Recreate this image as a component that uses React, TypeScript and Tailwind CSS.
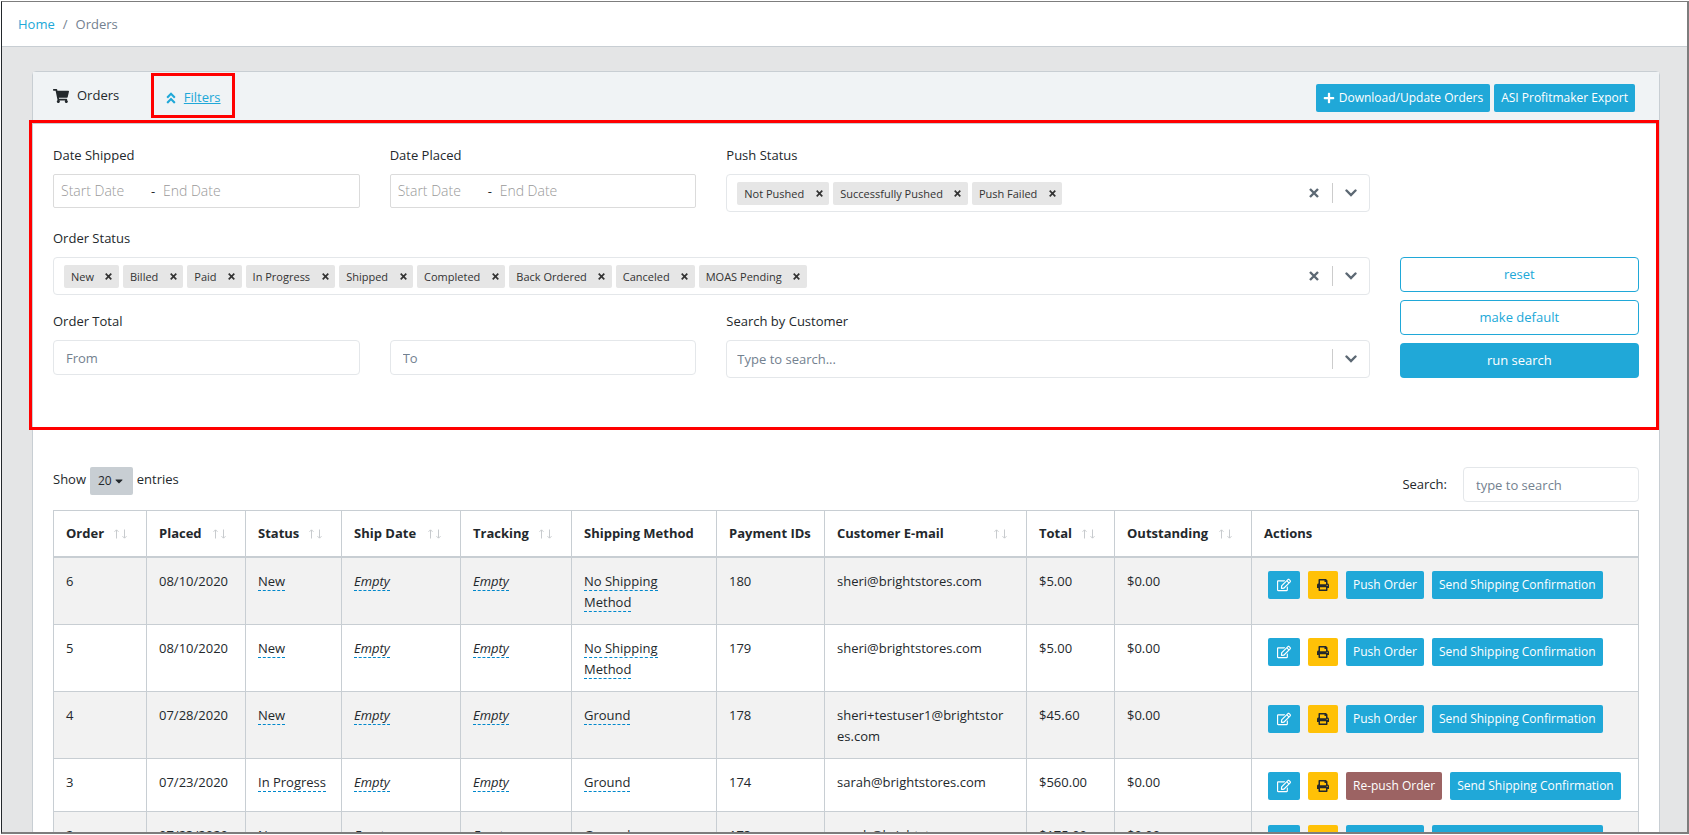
import type { ReactNode } from "react";
import { FaAngleDoubleUp, FaCaretDown, FaPlus, FaPrint, FaRegEdit, FaShoppingCart } from "react-icons/fa";

type Order = {
  id: number;
  placed: string;
  status: string;
  method: string;
  payment: string;
  email: string;
  total: string;
  pushed?: boolean;
};

const pushStatuses = ["Not Pushed", "Successfully Pushed", "Push Failed"];

const orderStatuses = [
  "New",
  "Billed",
  "Paid",
  "In Progress",
  "Shipped",
  "Completed",
  "Back Ordered",
  "Canceled",
  "MOAS Pending",
];

const columns = [
  { title: "Order", width: "w-[93px]", sortable: true },
  { title: "Placed", width: "w-[99px]", sortable: true },
  { title: "Status", width: "w-[96px]", sortable: true },
  { title: "Ship Date", width: "w-[119px]", sortable: true },
  { title: "Tracking", width: "w-[111px]", sortable: true },
  { title: "Shipping Method", width: "w-[145px]", sortable: false },
  { title: "Payment IDs", width: "w-[108px]", sortable: false },
  { title: "Customer E-mail", width: "w-[202px]", sortable: true },
  { title: "Total", width: "w-[88px]", sortable: true },
  { title: "Outstanding", width: "w-[137px]", sortable: true },
  { title: "Actions", width: "", sortable: false },
];

const orders: Order[] = [
  { id: 6, placed: "08/10/2020", status: "New", method: "No Shipping Method", payment: "180", email: "sheri@brightstores.com", total: "$5.00" },
  { id: 5, placed: "08/10/2020", status: "New", method: "No Shipping Method", payment: "179", email: "sheri@brightstores.com", total: "$5.00" },
  { id: 4, placed: "07/28/2020", status: "New", method: "Ground", payment: "178", email: "sheri+testuser1@brightstores.com", total: "$45.60" },
  { id: 3, placed: "07/23/2020", status: "In Progress", method: "Ground", payment: "174", email: "sarah@brightstores.com", total: "$560.00", pushed: true },
  { id: 2, placed: "07/23/2020", status: "New", method: "Ground", payment: "173", email: "sarah@brightstores.com", total: "$175.00" },
];

function Cross({ className }: { className: string }) {
  return (
    <svg viewBox="0 0 10 10" className={className} stroke="currentColor" strokeWidth="2.4" aria-hidden="true">
      <path d="M1 1l8 8M9 1l-8 8" />
    </svg>
  );
}

function Arrow() {
  return (
    <svg viewBox="0 0 12 8" className="w-3 h-2" fill="none" stroke="currentColor" strokeWidth="2.4" strokeLinecap="round" aria-hidden="true">
      <path d="M1.5 1.5L6 6l4.500-4.500" />
    </svg>
  );
}

function SortArrows() {
  return (
    <svg viewBox="0 0 13 10" className="w-[13px] h-[10px] text-[#c8cbce]" fill="none" stroke="currentColor" aria-hidden="true">
      <path d="M2.500 9.500V1M.5 2.800L2.500.8l2 2M10.500 .5V9M8.500 7.200l2 2 2-2" />
    </svg>
  );
}

function MultiSelect({ id, label, values = [] }: { id: string; label: string; values?: string[] }) {
  return (
    <div>
      <label htmlFor={id} className="block mb-2">{label}</label>

      <div className="flex h-[38px] items-center rounded border border-[#e4e7ea] bg-white pl-[10px]">
        <div className="flex gap-1">
          {values.map((value) => (
            <span key={value} className="flex h-[23px] items-center rounded-xs bg-[#e6e6e6] pl-[7px] text-[11px] text-[#333]">
              {value}
              <button aria-label={"Remove " + value} className="ml-[5px] flex h-full w-5 items-center justify-center">
                <Cross className="size-[7px]" />
              </button>
            </span>
          ))}
        </div>

        <input
          id={id}
          placeholder={values.length ? "" : "Type to search..."}
          className="min-w-0 flex-1 outline-none placeholder:text-[#73818f]"
        />

        {values.length > 0 && (
          <button aria-label={"Clear " + label} className="flex w-9 justify-center text-[#5c6873]">
            <Cross className="size-[10px]" />
          </button>
        )}
        <span className="h-5 w-px bg-[#ccc]" />
        <button aria-label={"Open " + label} className="flex w-9 justify-center text-[#5c6873]">
          <Arrow />
        </button>
      </div>
    </div>
  );
}

function DateRange({ id, label }: { id: string; label: string }) {
  return (
    <div>
      <label htmlFor={id} className="block mb-2">{label}</label>

      <div className="flex h-[34px] items-center rounded-xs border border-[#dbdbdb] bg-white pl-[7px]">
        <input id={id} placeholder="Start Date" className="w-[90px] text-sm font-light outline-none placeholder:text-[#999]" />
        <span className="w-[12px]">-</span>
        <input aria-label={label + " end"} placeholder="End Date" className="w-[90px] text-sm font-light outline-none placeholder:text-[#999]" />
      </div>
    </div>
  );
}

function SmallButton({ children, color = "bg-[#20a8d8] text-white", label }: { children: ReactNode; color?: string; label?: string }) {
  return (
    <button aria-label={label} className={"flex h-7 items-center gap-1 rounded-xs px-[7px] text-xs whitespace-nowrap " + color}>
      {children}
    </button>
  );
}

function Editable({ children }: { children: ReactNode }) {
  return (
    <a href="#edit" className="border-b border-dashed border-[#08c]">
      {children}
    </a>
  );
}

const input = "h-[35px] w-full rounded border border-[#e4e7ea] bg-white px-3 outline-none placeholder:text-[#73818f]";
const outline = "h-[35px] rounded border border-[#20a8d8] text-[#20a8d8]";
const cell = "border border-[#c8ced3] pl-3 pt-[13px] pb-[11px] align-top";

export default function App() {
  return (
    <div className="h-screen overflow-hidden bg-white py-px pl-px font-['Open_Sans',sans-serif] text-[13px] leading-[21px] text-[#23282c]">
      <div className="h-full overflow-hidden border border-r-2 border-b-2 border-[#7d7d7d] border-l-[#23282c] bg-[#e4e5e6]">

        <nav aria-label="Breadcrumb" className="flex h-[45px] items-center gap-2 border-b border-[#c8ced3] bg-white px-4">
          <a href="#home" className="text-[#20a8d8]">Home</a>
          <span className="text-[#73818f]">/</span>
          <span className="text-[#73818f]">Orders</span>
        </nav>

        <main className="mt-6 mr-[27px] ml-[30px] rounded border border-[#c8ced3] bg-white">

          <div className="flex h-[52px] items-start border-b border-[#c8ced3] bg-[#f0f3f5] pr-6 pl-5">
            <div className="mt-[13px] flex items-center gap-2">
              <FaShoppingCart className="size-4" />
              <h1>Orders</h1>
            </div>

            <button className="mt-px ml-8 flex h-[45px] w-[84px] items-center justify-center gap-[6px] border-3 border-[#ff0000] pt-1 pr-[2px] text-[#20a8d8]">
              <FaAngleDoubleUp className="size-[14px]" />
              <span className="underline">Filters</span>
            </button>

            <div className="mt-3 ml-auto flex gap-1">
              <SmallButton>
                <FaPlus className="size-3" />
                Download/Update Orders
              </SmallButton>
              <SmallButton>ASI Profitmaker Export</SmallButton>
            </div>
          </div>

          <section aria-label="Filters" className="relative border-b border-[#e4e7ea] px-5 pt-[21px] pb-[51px]">
            {/* highlight frame over the panel edges */}
            <div className="pointer-events-none absolute -top-1 right-0 -bottom-px -left-1 border-3 border-[#ff0000]" />

            <div className="grid grid-cols-12 gap-x-[30px]">
              <div className="col-span-10 grid grid-cols-4 gap-x-[30px] gap-y-4">
                <DateRange id="shipped" label="Date Shipped" />
                <DateRange id="placed" label="Date Placed" />
                <div className="col-span-2">
                  <MultiSelect id="push" label="Push Status" values={pushStatuses} />
                </div>

                <div className="col-span-4">
                  <MultiSelect id="status" label="Order Status" values={orderStatuses} />
                </div>

                <div>
                  <label htmlFor="from" className="block mb-2">Order Total</label>
                  <input id="from" placeholder="From" className={input} />
                </div>
                <div className="flex items-start pt-[29px]">
                  <input aria-label="Order total to" placeholder="To" className={input} />
                </div>
                <div className="col-span-2">
                  <MultiSelect id="customer" label="Search by Customer" />
                </div>
              </div>

              <div className="col-span-2 flex flex-col justify-end gap-2">
                <button className={outline}>reset</button>
                <button className={outline}>make default</button>
                <button className="h-[35px] rounded bg-[#20a8d8] text-white">run search</button>
              </div>
            </div>
          </section>

          <section aria-label="Order list" className="px-5 pt-[37px]">
            <div className="flex items-start">
              <div className="flex items-start gap-1">
                <span className="pt-[2px]">Show</span>
                <button className="flex h-7 items-center gap-px rounded-xs bg-[#c8ced3] px-2 text-xs">
                  20 <FaCaretDown className="size-3" />
                </button>
                <span className="pt-[2px]">entries</span>
              </div>

              <div className="ml-auto flex items-center gap-4">
                <label htmlFor="search">Search:</label>
                <div className="w-44">
                  <input id="search" placeholder="type to search" className={input} />
                </div>
              </div>
            </div>

            <table className="mt-2 w-full table-fixed border-collapse">
              <thead>
                <tr className="h-[46px]">
                  {columns.map((column) => (
                    <th key={column.title} className={"border border-b-2 border-[#c8ced3] pl-3 pt-px text-left font-bold whitespace-nowrap " + column.width}>
                      <div className="flex items-center justify-between pr-[19px]">
                        {column.title}
                        {column.sortable && <SortArrows />}
                      </div>
                    </th>
                  ))}
                </tr>
              </thead>

              <tbody>
                {orders.map((order) => (
                  <tr key={order.id} className="odd:bg-[#f2f2f2]">
                    <td className={cell}>{order.id}</td>
                    <td className={cell}>{order.placed}</td>
                    <td className={cell}><Editable>{order.status}</Editable></td>
                    <td className={cell}><Editable><i>Empty</i></Editable></td>
                    <td className={cell}><Editable><i>Empty</i></Editable></td>
                    <td className={cell + " pr-3"}><Editable>{order.method}</Editable></td>
                    <td className={cell}>{order.payment}</td>
                    <td className={cell + " pr-5 break-all"}>{order.email}</td>
                    <td className={cell}>{order.total}</td>
                    <td className={cell}>$0.00</td>
                    <td className={cell}>
                      <div className="flex gap-2 pl-1">
                        <SmallButton label="Edit"><FaRegEdit className="mx-px size-4 p-px" /></SmallButton>
                        <SmallButton label="Print" color="bg-[#ffc107] text-[#23282c]"><FaPrint className="size-4 p-[2px]" /></SmallButton>
                        {order.pushed ? (
                          <SmallButton color="bg-[#9c6363] text-white">Re-push Order</SmallButton>
                        ) : (
                          <SmallButton>Push Order</SmallButton>
                        )}
                        <SmallButton>Send Shipping Confirmation</SmallButton>
                      </div>
                    </td>
                  </tr>
                ))}
              </tbody>
            </table>
          </section>

        </main>
      </div>
    </div>
  );
}
